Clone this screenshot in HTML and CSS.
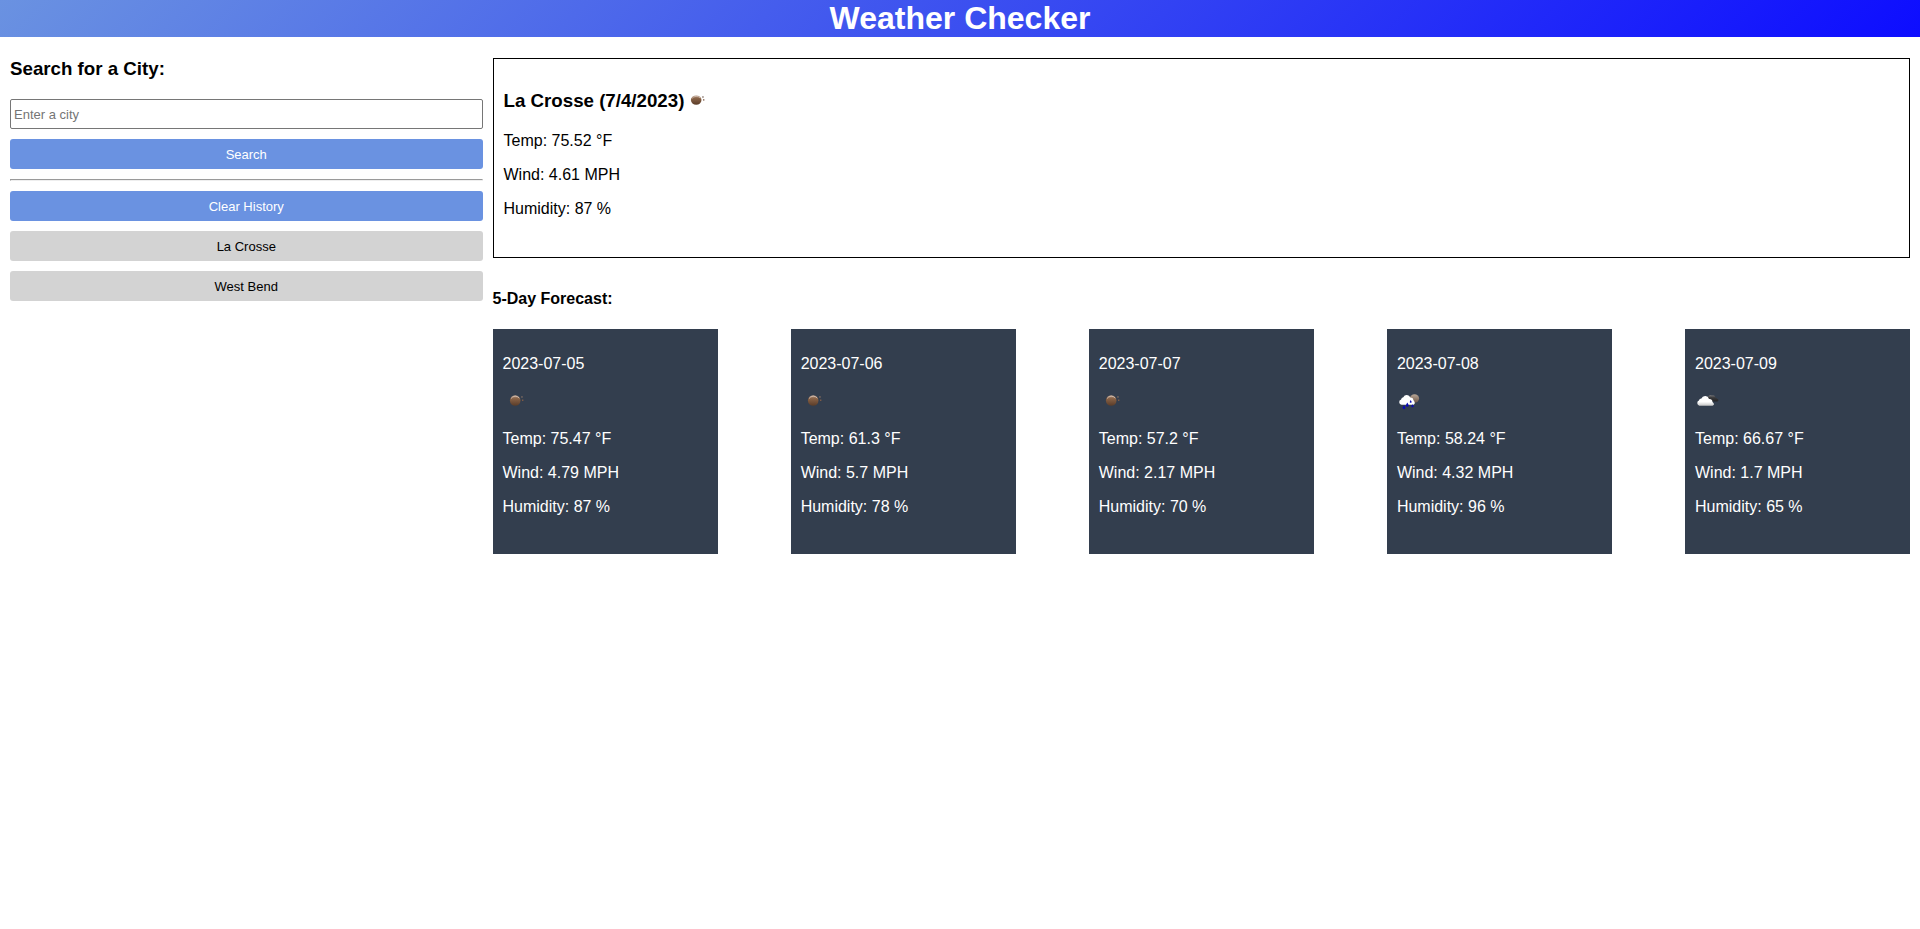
FILE: index.html
```html
<!DOCTYPE html>
<html lang="en">
<head>
<meta charset="utf-8">
<title>Weather Checker</title>
<link rel="stylesheet" href="styles.css">
</head>
<body>
<svg class="defs" width="0" height="0" aria-hidden="true">
  <defs>
    <linearGradient id="sunFill" x1="0" y1="0" x2="0" y2="1">
      <stop offset="0" stop-color="#b59b8a"/>
      <stop offset="0.3" stop-color="#8a6448"/>
      <stop offset="1" stop-color="#5a3c28"/>
    </linearGradient>
    <linearGradient id="paleSunFill" x1="0" y1="0" x2="0" y2="1">
      <stop offset="0" stop-color="#b8a696"/>
      <stop offset="1" stop-color="#6e5646"/>
    </linearGradient>
    <linearGradient id="cloudFill" x1="0" y1="0" x2="0" y2="1">
      <stop offset="0.6" stop-color="#ffffff"/>
      <stop offset="1" stop-color="#c4c4c4"/>
    </linearGradient>
    <linearGradient id="darkFill" x1="0" y1="0" x2="0" y2="1">
      <stop offset="0" stop-color="#77777a"/>
      <stop offset="0.4" stop-color="#3a3a3c"/>
      <stop offset="1" stop-color="#222224"/>
    </linearGradient>
    <symbol id="clear" viewBox="0 0 25 25" preserveAspectRatio="none">
      <circle cx="12.2" cy="11.5" r="5.3" fill="url(#sunFill)"/>
      <path d="M8.1 9.5a5 5 0 0 1 8.2-.3" fill="none" stroke="#d8c4b6" stroke-width="0.8"/>
      <rect x="18.2" y="7.2" width="1.5" height="1.5" fill="#7d6a60"/>
      <rect x="19" y="10.5" width="1.4" height="1.5" fill="#7d5a48"/>
    </symbol>
    <symbol id="rain" viewBox="0 0 25 25">
      <ellipse cx="17.5" cy="9.5" rx="4.6" ry="4.2" fill="url(#paleSunFill)"/>
      <path d="M4.5 15.8a2.8 2.8 0 0 1-.4-5.4 2.600 2.600 0 0 1 2.200-2.200 3.800 3.800 0 0 1 7 .4 2.900 2.900 0 0 1 3.200 2.600q2.600 3 0 4.600z" fill="#fff"/>
      <path d="M7 16.200l1.200 1.800a1.400 1.400 0 1 1-2.400 0zM10.300 13.500l1.200 2.200a1.400 1.400 0 1 1-2.400 0zM13.700 11l.8 1.400a.9.9 0 1 1-1.600 0zM15.500 15.200l1 1.600a1.100 1.100 0 1 1-2 0z" fill="#0a0ab4"/>
    </symbol>
    <symbol id="clouds" viewBox="0 0 25 25">
      <path d="M12.5 9a3.200 3.200 0 0 1 4.600-2.600 3 3 0 0 1 3.400 2l2.800 2v1.600l-1.300.5h-6z" fill="url(#darkFill)"/>
      <path d="M4.300 16.700a2.700 2.700 0 0 1-.4-5.100 2.600 2.600 0 0 1 2.500-2 4 4 0 0 1 7.600.5 3.200 3.200 0 0 1 3.500 2.800q3 2.600 0 3.800z" fill="url(#cloudFill)"/>
    </symbol>
  </defs>
</svg>

<header class="header">
  <h1 class="header-title">Weather Checker</h1>
</header>

<div class="layout">
  <aside class="sidebar">
    <h3 class="section-title"><label for="city">Search for a City:</label></h3>
    <input class="city-input" id="city" type="text" placeholder="Enter a city">
    <button class="btn btn-primary" type="button">Search</button>
    <hr class="divider">
    <button class="btn btn-primary" type="button">Clear History</button>
    <button class="btn btn-history" type="button">La Crosse</button>
    <button class="btn btn-history" type="button">West Bend</button>
  </aside>

  <main class="results">
    <section class="current">
      <h3 class="current-title">La Crosse (7/4/2023)<svg class="current-icon" role="img" aria-label="Clear"><use href="#clear"/></svg></h3>
      <p>Temp: 75.52 °F</p>
      <p>Wind: 4.61 MPH</p>
      <p>Humidity: 87 %</p>
    </section>

    <h4 class="forecast-title">5-Day Forecast:</h4>
    <section class="forecast">
      <article class="card">
        <p>2023-07-05</p>
        <svg class="card-icon" role="img" aria-label="Clear"><use href="#clear"/></svg>
        <p>Temp: 75.47 °F</p>
        <p>Wind: 4.79 MPH</p>
        <p>Humidity: 87 %</p>
      </article>
      <article class="card">
        <p>2023-07-06</p>
        <svg class="card-icon" role="img" aria-label="Clear"><use href="#clear"/></svg>
        <p>Temp: 61.3 °F</p>
        <p>Wind: 5.7 MPH</p>
        <p>Humidity: 78 %</p>
      </article>
      <article class="card">
        <p>2023-07-07</p>
        <svg class="card-icon" role="img" aria-label="Clear"><use href="#clear"/></svg>
        <p>Temp: 57.2 °F</p>
        <p>Wind: 2.17 MPH</p>
        <p>Humidity: 70 %</p>
      </article>
      <article class="card">
        <p>2023-07-08</p>
        <svg class="card-icon" role="img" aria-label="Rain"><use href="#rain"/></svg>
        <p>Temp: 58.24 °F</p>
        <p>Wind: 4.32 MPH</p>
        <p>Humidity: 96 %</p>
      </article>
      <article class="card">
        <p>2023-07-09</p>
        <svg class="card-icon" role="img" aria-label="Clouds"><use href="#clouds"/></svg>
        <p>Temp: 66.67 °F</p>
        <p>Wind: 1.7 MPH</p>
        <p>Humidity: 65 %</p>
      </article>
    </section>
  </main>
</div>
</body>
</html>
```

FILE: styles.css
```css
* {
  box-sizing: border-box;
}

body {
  margin: 0;
  font-family: "Liberation Sans", Arial, sans-serif;
  font-size: 16px;
  line-height: 18px;
  color: #000;
  background: #fff;
}

.defs {
  position: absolute;
}

p {
  margin: 16px 0;
}

.header {
  background: linear-gradient(135deg, #6a92e1, #0d0dff);
  color: #fff;
  text-align: center;
}

.header-title {
  margin: 0;
  font-size: 32px;
  line-height: 37px;
}

.layout {
  display: grid;
  grid-template-columns: minmax(0, 1fr) minmax(0, 3fr);
  gap: 10px;
  padding: 21px 10px 10px;
}

.sidebar {
  display: flex;
  flex-direction: column;
  gap: 10px;
}

.section-title {
  margin: 0 0 10px;
  line-height: 21px;
}

.city-input {
  height: 30px;
  width: 100%;
  border: 1px solid #767676;
  border-radius: 2px;
  padding: 1px 3px;
  font: 13px "Liberation Sans", Arial, sans-serif;
}

.city-input::placeholder {
  color: #757575;
}

.btn {
  height: 30px;
  border: 0;
  border-radius: 3px;
  font: 13px "Liberation Sans", Arial, sans-serif;
  cursor: pointer;
}

.btn-primary {
  background: #6a92e1;
  color: #fff;
}

.btn-history {
  background: #d3d3d3;
  color: #000;
}

.divider {
  width: 100%;
  margin: 0;
}

.current {
  min-height: 200px;
  padding: 10px;
  border: 1px solid #000;
}

.current-title {
  display: flex;
  align-items: center;
  margin: 20px 0 19px;
  line-height: 24px;
}

.current-icon {
  width: 25px;
  height: 22px;
}

.forecast-title {
  margin: 32px 0 21px;
}

.forecast {
  display: flex;
  justify-content: space-between;
}

.card {
  width: 225px;
  min-height: 225px;
  padding: 10px;
  background: #333e4e;
  color: #fff;
}

.card-icon {
  display: block;
  width: 25px;
  height: 25px;
}
```
